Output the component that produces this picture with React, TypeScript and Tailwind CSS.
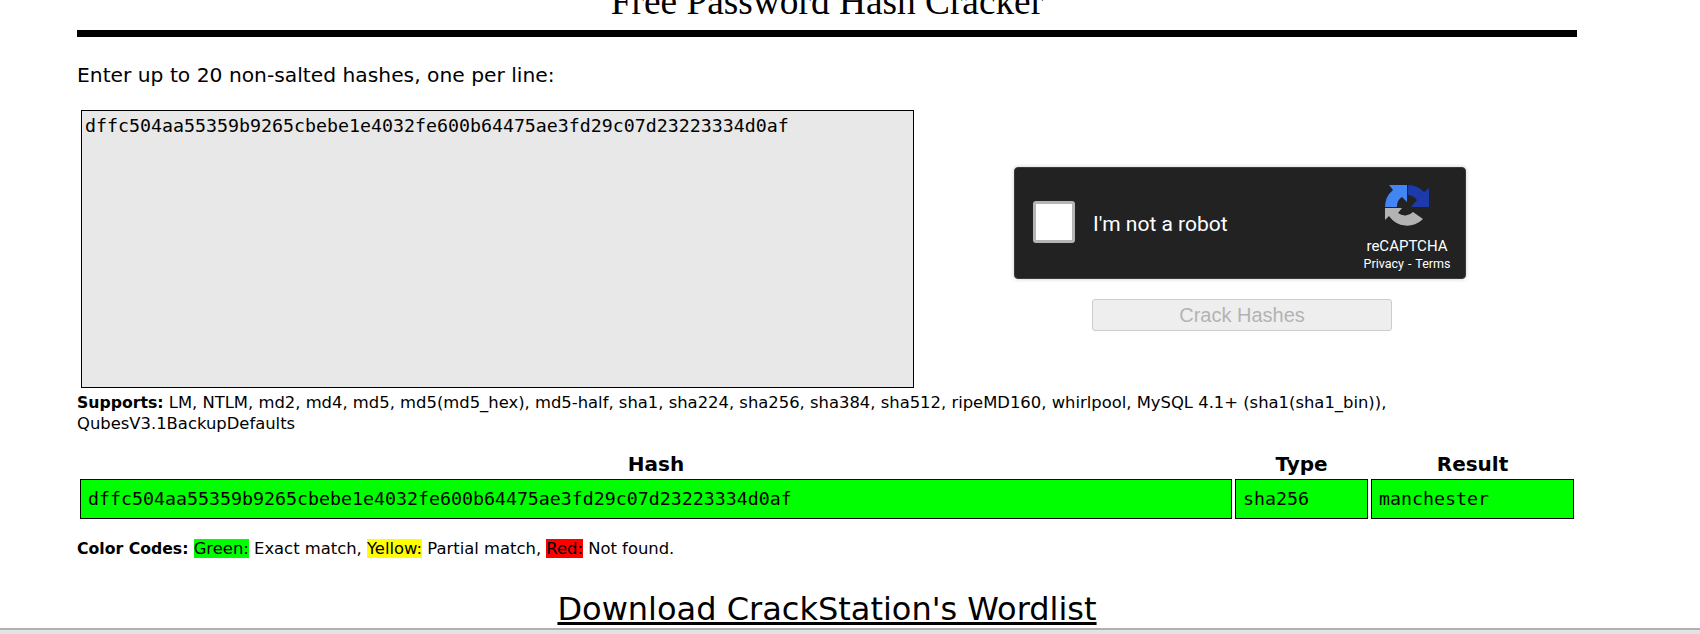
const HASH = "dffc504aa55359b9265cbebe1e4032fe600b64475ae3fd29c07d23223334d0af";
const sans = "font-['DejaVu_Sans','Verdana',sans-serif]";
const mono = "font-['DejaVu_Sans_Mono','Liberation_Mono',monospace]";

function RecaptchaLogo() {
	return <svg viewBox="0 0 44 41" className="w-[44px] h-[41px]">
		<path d="M23 0 A22 22 0 0 1 39 7 L44 3 L44 22 L26 22 L32 15 A13 13 0 0 0 23 10 Z" fill="#1c3aa9" />
		<path d="M0 22 A22 22 0 0 1 8 5 L4 0 L22 0 L22 17 L17 12 A11 11 0 0 0 12 22 Z" fill="#4285f4" />
		<path d="M0 23 L17 23 L13 28 A11 11 0 0 0 28 27 L38 34 A22 22 0 0 1 4 31 L0 35 Z" fill="#b3b3b3" />
	</svg>;
}

function Recaptcha() {
	return <div className="w-[452px] h-[112px] bg-[#222222] border border-[#3a3a3a] rounded-[4px] shadow-[0_0_4px_rgba(0,0,0,0.2)] flex items-center font-['Roboto',sans-serif] text-white">
		<div className="ml-[18px] mb-[2px] w-[42px] h-[42px] bg-white border-[3px] border-[#b5b5b5] rounded-[3px]"></div>
		<span className="ml-[18px] mt-[4px] text-[21px]">I'm not a robot</span>
		<div className="ml-auto w-[100px] mr-[8px] self-start flex flex-col items-center pt-[17px]">
			<RecaptchaLogo />
			<span className="mt-[11px] text-[15px] leading-[18px]">reCAPTCHA</span>
			<span className="mt-[2px] text-[12.5px] leading-[14px] whitespace-nowrap [word-spacing:1px]">Privacy - Terms</span>
		</div>
	</div>;
}

function ResultCell({ text, className }: { text: string; className: string }) {
	return <div className={`h-[40px] bg-[#00ff00] border border-black flex items-center pl-[7px] ${mono} text-[18.28px] ${className}`}>{text}</div>;
}

export default function App() {
	return <div className={`h-[634px] overflow-hidden bg-white text-black flex flex-col ${sans}`}>
		<div className="w-[1500px] ml-[77px] flex-1 min-h-0">
			<h1 className="h-[30px] pb-[8px] flex items-end justify-center font-['Liberation_Serif',serif] text-[37.33px] leading-[41px] overflow-hidden">Free Password Hash Cracker</h1>
			<div className="h-[7px] bg-black"></div>
			<p className="mt-[26px] text-[20.25px] leading-[24px]">Enter up to 20 non-salted hashes, one per line:</p>
			<div className="mt-[23px] flex">
				<div className={`ml-[4px] w-[833px] h-[278px] bg-[#e8e8e8] border border-black px-[3px] pt-[4px] ${mono} text-[18.28px] leading-[22px]`}>{HASH}</div>
				<div className="ml-[100px] pt-[57px] flex flex-col items-center">
					<Recaptcha />
					<button className="mt-[20px] ml-[4px] w-[300px] h-[32px] bg-[#eeeeee] border border-[#cccccc] rounded-[3px] text-[#b3b3b3] text-[20px] font-['Liberation_Sans',sans-serif]">Crack Hashes</button>
				</div>
			</div>
			<p className="mt-[4px] text-[16.4px] leading-[21px]"><b className="text-[15.7px]">Supports:</b> LM, NTLM, md2, md4, md5, md5(md5_hex), md5-half, sha1, sha224, sha256, sha384, sha512, ripeMD160, whirlpool, MySQL 4.1+ (sha1(sha1_bin)), QubesV3.1BackupDefaults</p>
			<div className="mt-[16px] flex gap-[3px] px-[3px] text-center font-bold text-[20px] leading-[29px]">
				<div className="w-[1152px]">Hash</div>
				<div className="w-[133px]">Type</div>
				<div className="w-[203px]">Result</div>
			</div>
			<div className="flex gap-[3px] px-[3px]">
				<ResultCell text={HASH} className="w-[1152px]" />
				<ResultCell text="sha256" className="w-[133px]" />
				<ResultCell text="manchester" className="w-[203px]" />
			</div>
			<p className="mt-[19px] text-[16.4px] leading-[21px]"><b className="text-[15.7px]">Color Codes:</b> <span className="bg-[#00ff00]">Green:</span> Exact match, <span className="bg-[#ffff00]">Yellow:</span> Partial match, <span className="bg-[#ff0000]">Red:</span> Not found.</p>
			<div className="mt-[31px] text-center text-[32px] leading-[38px] underline decoration-[3px]">Download CrackStation's Wordlist</div>
		</div>
		<div className="h-[6px] shrink-0 bg-[#e3e3e3] border-t-2 border-[#b0b0b0]"></div>
	</div>;
}
